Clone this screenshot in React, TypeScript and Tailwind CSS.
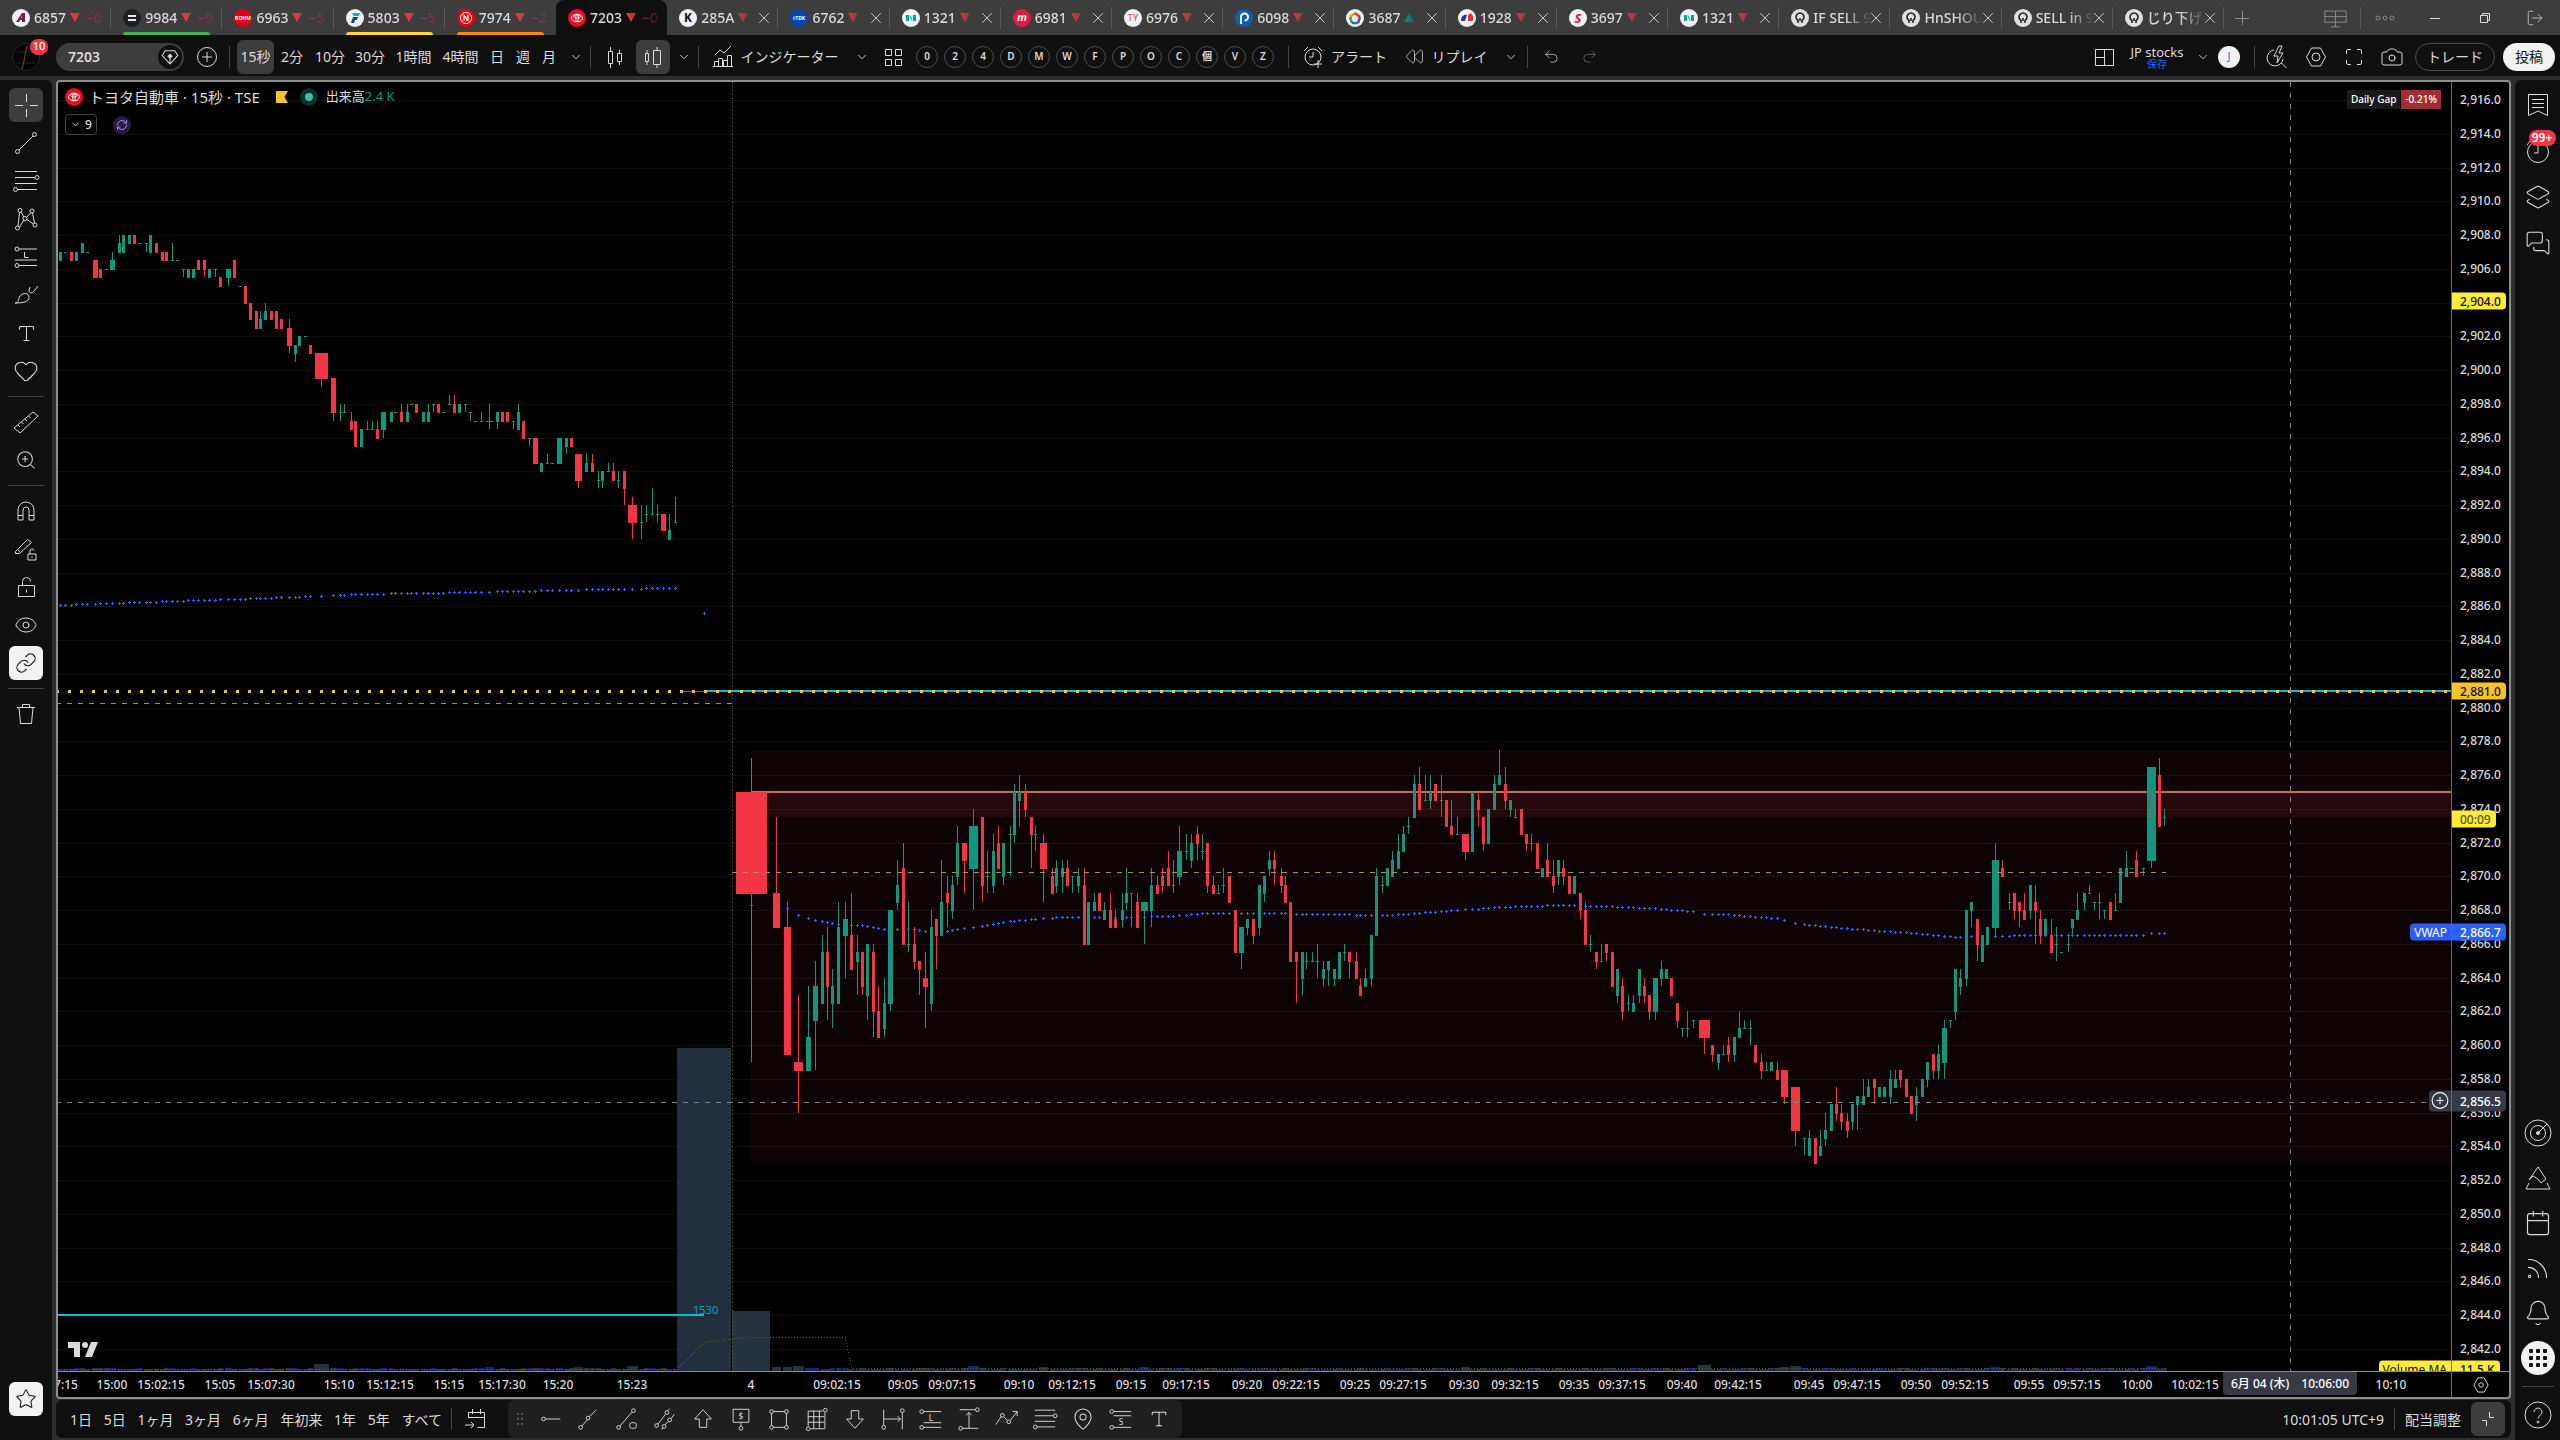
import type { ReactNode } from "react";
import {
  Bell,
  Calendar,
  Camera,
  ChevronDown,
  Eye,
  Heart,
  Layers2,
  Link,
  LockOpen,
  LogOut,
  MapPin,
  MessagesSquare,
  Redo2,
  RefreshCw,
  Rewind,
  Rss,
  Ruler,
  Star,
  Trash2,
  Type,
  Undo2,
  X,
  ZoomIn,
} from "lucide-react";

// plot geometry, shared by the svg and the labels laid over it
const PLOT_W = 2393;
const PLOT_H = 1289;
const TOP_PRICE = 2916;
const TOP_Y = 18;
const PX_PER_YEN = 16.878;

const priceY = (p: number) => TOP_Y + (TOP_PRICE - p) * PX_PER_YEN;
const pctY = (y: number) => `${(y / PLOT_H) * 100}%`;
const pctX = (x: number) => `${(x / PLOT_W) * 100}%`;

// [x, open, close, high, low, width], prices are offsets from 2800
type Bar = [number, number, number, number?, number?, number?];

const prevSession: Bar[] = [
  [2, 106.5, 107], [7, 107, 107], [13, 107, 106.5], [18, 106.5, 107], [24, 107, 107.5], [29, 107, 107],
  [37, 106.5, 105.5, 106.5, 105.5, 5], [42, 106, 105.5], [48, 106, 106], [54, 106, 106.5, 107, 106, 5],
  [61, 107, 107.5, 108], [65, 107, 108], [71, 107.5, 108], [76, 108, 107.5], [81, 107.5, 107.5],
  [88, 107.5, 107.5, 107.5, 107], [92, 107, 108], [98, 107.5, 107], [104, 107, 106.5], [108, 107, 106.5],
  [114, 106.5, 106.5, 107.5], [119, 106.5, 106.5], [125, 106, 106, 106, 105.5], [130, 105.5, 106],
  [135, 105.5, 106], [140, 106.5, 106], [146, 106.5, 106, 106.5, 105.5], [151, 105.5, 106],
  [157, 106, 106, 106, 105.5], [162, 105.5, 105], [170, 105.5, 106, 106, 105, 5], [176, 106.5, 105.5],
  [182, 105, 105], [187, 105, 104], [192, 104, 103], [198, 103.5, 102.5], [202, 102.5, 103, 103.5],
  [207, 103, 103.5, 104], [213, 103.5, 103], [218, 103.5, 102.5], [223, 103, 102.5],
  [231, 102.5, 101.5, 103, 101, 5], [237, 101, 101.5, 101.5, 100.5], [241, 101.5, 102], [247, 102, 102],
  [252, 101.5, 101], [263, 101, 99.5, 101, 99, 13], [275, 99.5, 97.5, 99.5, 97, 5], [282, 97.5, 97.5, 98, 97],
  [286, 97.5, 97.5, 98], [293, 97, 96.5, 97.5], [297, 97, 95.5], [303, 95.5, 96.5], [309, 96.5, 96.5, 97],
  [314, 96.5, 96.5, 97], [319, 96.5, 96, 97], [325, 96.5, 97.5, 97.5, 96, 5], [333, 97, 97.5],
  [337, 97.5, 97.5], [343, 97.5, 97, 98], [349, 97, 97.5, 98], [353, 98, 98], [358, 98, 97.5],
  [365, 97, 97.5], [370, 97, 97.5, 98], [375, 98, 98, 98, 97.5], [380, 98, 97.5], [385, 97.5, 97.5],
  [391, 98, 98, 98.5], [396, 98, 97.5, 98.5], [401, 97.5, 98], [407, 98, 98, 98, 97.5],
  [412, 97.5, 97.5, 97.5, 97], [417, 97, 97], [423, 97, 97, 97.5], [431, 97, 97, 98, 96.5, 7],
  [439, 97, 97.5, 97.5, 96.5], [444, 97.5, 97], [449, 97.5, 97], [455, 97, 97, 97, 96.5],
  [460, 96.5, 97.5, 98], [465, 97, 96], [471, 96, 96, 96, 95.5], [477, 96, 94.5, 96, 94.5, 5],
  [483, 94, 94.5], [489, 94.5, 94.5, 95], [494, 94.5, 94.5], [501, 94.5, 96, 96, 94.5, 5],
  [508, 95.5, 96, 96, 95], [513, 96, 95.5], [520, 95, 93.5, 95, 93, 7], [528, 94, 94.5, 95],
  [534, 94.5, 94, 95], [540, 93.5, 93.5, 94, 93], [544, 93.5, 94, 94, 93], [550, 94, 94, 94.5],
  [555, 94, 93.5, 94.5], [560, 93.5, 93.5, 94, 93], [566, 94, 93, 94, 92], [574, 92, 91, 92.5, 90, 9],
  [583, 91, 91, 92, 90], [588, 91.5, 91.5, 92, 91], [594, 91.5, 91.5, 93], [599, 91.5, 91.5, 92, 91],
  [605, 91.5, 90.5, 91.5, 90.5, 5], [611, 90, 90.5, 91.5], [617, 91, 91, 92.5],
];

const session: Bar[] = [
  [693, 75, 69, 77, 59, 31], [718, 69, 67, 73.5, 67, 7], [729, 67, 59.5, 68.5, 59.5, 7],
  [740, 59, 58.5, 63, 56, 9], [750, 58.5, 60.5, 63.5, 58.5, 5], [757, 61.5, 63.5, 65, 58.5, 5],
  [764, 62.5, 65.5, 66.5], [769, 65.5, 63.5, 67, 61.5], [774, 62.5, 63.5, 64.5, 61], [780, 62.5, 67, 68.5],
  [787, 66.5, 67.5, 68.5, 64, 5], [793, 66.5, 64.5, 69], [799, 65, 65.5, 66.5, 63], [804, 65.5, 63.5, 65.5, 63],
  [809, 63, 66, 66, 61.5], [815, 65.5, 62, 66, 60.5], [820, 62, 60.5, 63.5], [826, 61, 62.5, 64, 60.5],
  [832, 62.5, 68, 68, 62, 5], [839, 68.5, 69.5, 71, 68], [845, 70.5, 66, 72], [850, 66, 66, 68.5, 65.5],
  [856, 66, 65, 67, 64.5], [861, 65, 64.5, 65, 63], [867, 64, 63.5, 65.5, 61, 5], [873, 62.5, 67, 68, 62],
  [878, 67.5, 66.5, 67.5, 64.5], [883, 66.5, 68.5, 71], [889, 69, 68.5, 70, 67], [894, 68, 69.5, 70, 67.5],
  [899, 70, 72, 73, 69.5], [906, 72, 71, 72, 69, 5], [915, 70.5, 73, 74, 68, 9], [924, 73.5, 69.5, 73.5, 68.5],
  [929, 70, 70, 71.5, 69], [935, 69.5, 71.5, 72.5, 69], [940, 72, 70.5, 73], [945, 70, 72, 72, 69.5],
  [952, 72.5, 72.5, 73, 70], [956, 72.5, 75, 75.5, 72], [961, 74.5, 75, 76, 73], [967, 75, 74, 75.5, 73.5],
  [973, 73.5, 72.5, 73.5, 70.5], [977, 72.5, 72.5, 73, 71.5], [985, 72, 70.5, 72.5, 68.5, 7], [994, 70, 69, 70.5],
  [998, 69.5, 70.5, 71, 69], [1004, 70, 70.5, 71, 69], [1009, 70.5, 69.5, 71], [1014, 70, 70, 70, 69],
  [1020, 69.5, 70, 70.5, 69], [1026, 69.5, 66, 70.5], [1030, 66, 68.5], [1036, 68, 68.5, 69], [1041, 69, 68],
  [1046, 67.5, 68, 68.5], [1052, 68, 67, 69], [1057, 67.5, 67, 68], [1064, 67.5, 68, 69, 67],
  [1068, 68.5, 69, 70.5, 68], [1073, 69, 69, 69, 67], [1079, 68.5, 67, 69], [1086, 68, 68.5, 68.5, 66, 7],
  [1093, 68, 69.5, 70.5, 67], [1099, 69.5, 69, 70], [1104, 70, 69.5, 70.5, 69], [1110, 70.5, 69.5, 71.5],
  [1115, 69.5, 69.5, 71, 69], [1121, 70, 71.5, 73, 69.5, 5], [1128, 71.5, 71.5, 72.5, 71],
  [1133, 71, 72, 72.5, 70.5], [1139, 72.5, 72, 73, 71], [1144, 71.5, 71.5, 72.5, 71], [1149, 72, 69.5, 72, 69],
  [1155, 69.5, 69, 70], [1160, 69, 69, 69.5], [1165, 69.5, 69.5, 70.5, 69], [1171, 70, 68.5], [1177, 68, 65.5],
  [1183, 65.5, 67, 67, 64.5, 5], [1189, 67, 67.5, 67.5, 66.5], [1195, 67.5, 66.5, 67.5, 66],
  [1201, 67, 69.5, 69.5, 66.5], [1206, 69, 70, 70, 68.5], [1211, 70.5, 71, 71.5, 70], [1216, 71, 70.5, 71.5, 69.5],
  [1223, 70, 69.5, 70.5, 69], [1227, 69.5, 68.5, 70], [1232, 68.5, 65], [1238, 65.5, 65, 65.5, 62.5],
  [1244, 64, 65.5, 65.5, 63], [1248, 65, 65, 65.5, 64.5], [1254, 65, 65, 65.5], [1259, 65, 65, 66, 64],
  [1265, 64, 64.5, 65, 63.5], [1270, 64.5, 65, 65, 63.5], [1276, 64, 64.5, 64.5, 63.5], [1281, 64, 65.5],
  [1286, 65.5, 65.5, 66, 65], [1291, 65.5, 65, 65.5, 64], [1298, 65, 64, 65.5], [1302, 63.5, 63, 64],
  [1307, 63.5, 64, 64.5], [1313, 64, 66.5, 66.5, 63.5], [1318, 66.5, 70, 70.5], [1324, 69.5, 69.5, 70, 69],
  [1329, 69.5, 70.5], [1334, 70, 71, 71.5], [1340, 70.5, 71.5, 72.5], [1345, 71.5, 72.5, 73],
  [1350, 73, 73, 73.5, 72.5], [1356, 73.5, 75.5, 76], [1361, 75.5, 74, 76.5], [1367, 74.5, 74.5, 76],
  [1372, 74.5, 75, 76, 74], [1377, 75.5, 74.5], [1383, 74.5, 74.5, 76, 73.5], [1388, 74.5, 73],
  [1393, 73, 72.5, 74.5], [1399, 72.5, 72.5, 73.5], [1407, 72.5, 71.5, 72.5, 71, 7], [1414, 71.5, 75],
  [1420, 74.5, 74, 75, 73], [1425, 73.5, 72, 73.5, 71.5], [1430, 72, 74], [1436, 74, 75.5, 76],
  [1441, 75.5, 76, 77.5], [1447, 75.5, 74.5, 76.5, 74], [1452, 74, 74.5, 74.5, 73.5], [1457, 73.5, 73.5, 74],
  [1463, 74, 72.5], [1468, 72.5, 72, 72.5, 71.5], [1473, 72, 72, 72.5, 71.5], [1479, 72, 70.5], [1484, 70, 70.5],
  [1489, 71, 70, 72], [1495, 70, 69.5, 71, 69], [1500, 70, 71, 71, 69.5], [1505, 70.5, 70, 71, 69.5],
  [1511, 70, 69], [1516, 69, 70], [1522, 69, 68, 69, 67.5], [1527, 68, 66, 68.5], [1532, 66, 66, 66.5, 65.5],
  [1538, 65.5, 65, 65.5, 64.5], [1543, 65, 65, 66], [1548, 66, 65.5, 66, 65], [1554, 65.5, 63.5],
  [1559, 63, 64.5, 64.5, 62.5], [1564, 63.5, 62, 64, 61.5], [1570, 62.5, 62.5, 63, 62], [1575, 62, 62.5, 63],
  [1581, 63, 64.5, 64.5, 62.5], [1586, 63.5, 63, 64, 62.5], [1591, 63, 62, 63, 61.5], [1597, 62, 64, 64, 61.5, 5],
  [1603, 64, 64.5, 65, 63.5], [1608, 64, 64.5], [1613, 64, 63], [1619, 62.5, 61.5, 62.5, 61],
  [1624, 61, 61, 61, 60.5], [1629, 61, 61, 62, 60.5], [1635, 61.5, 61.5, 61.5, 61], [1646, 61.5, 60.5, 61.5, 59.5, 11],
  [1654, 60, 59.5, 60, 59], [1660, 59, 59.5, 59.5, 58.5], [1665, 59.5, 59.5, 60], [1670, 60, 59.5, 60.5, 59],
  [1676, 59.5, 60.5, 60.5, 59], [1681, 60.5, 61, 62], [1686, 61, 61, 61.5], [1692, 61, 61, 61.5, 60],
  [1697, 60, 59], [1703, 59, 58.5, 59.5, 58], [1708, 58.5, 58.5, 59], [1713, 58.5, 59], [1719, 58.5, 58, 59],
  [1726, 58.5, 57, 58.5, 56.5, 7], [1737, 57.5, 55, 57.5, 54, 9], [1746, 54.5, 54.5, 54.5, 53.5],
  [1751, 53.5, 54.5, 55], [1757, 54.5, 53], [1762, 53.5, 54, 55], [1767, 54.5, 55, 56, 54], [1773, 55, 56.5],
  [1778, 56.5, 56, 57.5, 55.5], [1783, 56, 55.5, 56.5, 55], [1789, 55.5, 55, 56, 54.5], [1794, 55.5, 56.5, 56.5, 55],
  [1799, 56.5, 57, 57, 55], [1805, 56.5, 57, 58], [1810, 57, 57.5, 58], [1816, 58, 57.5, 58, 56.5],
  [1821, 57, 57.5], [1826, 57, 57.5], [1832, 57, 58, 58.5, 56.5], [1837, 57.5, 58, 58.5],
  [1842, 58.5, 58, 58.5, 57.5], [1848, 58, 57], [1853, 57, 56], [1858, 56.5, 57, 57.5, 55.5], [1864, 57, 58],
  [1869, 58, 59, 59, 57.5], [1875, 59.5, 58.5, 59.5, 58], [1880, 58.5, 59.5, 60, 58], [1886, 59, 61, 61.5, 58, 5],
  [1892, 61.5, 61.5, 61.5, 61], [1897, 62, 64.5, 64.5, 61.5], [1902, 63.5, 64, 64.5, 63], [1908, 64, 68, 68, 63.5],
  [1913, 68, 68.5, 68.5, 67], [1919, 67.5, 66, 67.5, 65], [1924, 65, 66.5], [1929, 66, 67],
  [1937, 67, 71, 72, 66.5, 7], [1944, 70.5, 70, 71], [1951, 68.5, 68.5, 69, 68], [1956, 69, 68, 69, 67.5],
  [1961, 68.5, 68, 68.5, 67], [1966, 68, 67.5, 69], [1972, 68, 69.5, 69.5, 67.5], [1977, 68.5, 68, 69.5, 66],
  [1982, 67.5, 66.5, 68, 66], [1987, 66.5, 67.5], [1993, 66.5, 65.5, 67.5], [1998, 66, 66, 67, 65],
  [2003, 65.5, 65.5], [2010, 66, 66, 66.5, 65.5], [2014, 67, 67.5, 67.5, 66.5], [2019, 67.5, 68, 69],
  [2026, 68.5, 69, 69, 68], [2031, 69, 69, 69.5], [2036, 68.5, 68.5, 68.5, 68], [2041, 68.5, 68.5, 69, 67.5],
  [2046, 68, 68, 68, 67.5], [2052, 68.5, 67.5], [2057, 68, 68, 69], [2062, 68.5, 70.5], [2068, 70, 70.5, 71.5],
  [2073, 70.5, 70.5], [2078, 71, 70, 71.5], [2085, 70.5, 70.5, 70.5, 70], [2093, 71, 76.5, 76.5, 70.5, 9],
  [2101, 76, 73, 77], [2106, 73.5, 73.5, 74, 73],
];

const vwap: [number, number][] = [
  [2, 523], [54, 521], [114, 519], [176, 517], [231, 515], [275, 513], [303, 512], [358, 511], [417, 510],
  [455, 509], [501, 508], [550, 507], [617, 506], [693, 823], [729, 826], [740, 833], [750, 836], [757, 838],
  [780, 842], [804, 843], [826, 847], [856, 847], [867, 849], [889, 849], [906, 846], [935, 842], [961, 838],
  [985, 836], [1004, 835], [1057, 835], [1115, 834], [1149, 831], [1227, 831], [1244, 832], [1286, 832],
  [1300, 833], [1334, 833], [1356, 831], [1399, 828], [1441, 825], [1500, 823], [1548, 824], [1591, 826],
  [1635, 829], [1646, 832], [1665, 832], [1700, 835], [1719, 836], [1737, 841], [1762, 844], [1800, 847],
  [1842, 850], [1880, 853], [1902, 855], [1913, 854], [1998, 853], [2085, 853], [2093, 851], [2106, 851],
];

function vwapAt(x: number) {
  const i = Math.max(1, vwap.findIndex(([vx]) => vx >= x));
  const [x0, y0] = vwap[i - 1];
  const [x1, y1] = vwap[i];
  return Math.round(y0 + ((x - x0) / (x1 - x0)) * (y1 - y0));
}

const timeLabels: [string, number][] = [
  ["14:57:15", -4], ["15:00", 54], ["15:02:15", 103], ["15:05", 162], ["15:07:30", 213], ["15:10", 281],
  ["15:12:15", 332], ["15:15", 391], ["15:17:30", 444], ["15:20", 500], ["15:23", 574], ["4", 693],
  ["09:02:15", 779], ["09:05", 845], ["09:07:15", 894], ["09:10", 961], ["09:12:15", 1014], ["09:15", 1073],
  ["09:17:15", 1128], ["09:20", 1189], ["09:22:15", 1238], ["09:25", 1297], ["09:27:15", 1345],
  ["09:30", 1406], ["09:32:15", 1457], ["09:35", 1516], ["09:37:15", 1564], ["09:40", 1624],
  ["09:42:15", 1680], ["09:45", 1751], ["09:47:15", 1799], ["09:50", 1858], ["09:52:15", 1907],
  ["09:55", 1971], ["09:57:15", 2019], ["10:00", 2079], ["10:02:15", 2137], ["10:10", 2333],
];

function Glyph({ size = 28, children }: { size?: number; children: ReactNode }) {
  return (
    <svg width={size} height={size} viewBox="0 0 28 28" fill="none" stroke="currentColor" className="shrink-0" aria-hidden="true">
      {children}
    </svg>
  );
}

function Dots({ at }: { at: [number, number][] }) {
  return (
    <>
      {at.map(([x, y]) => (
        <circle key={`${x}-${y}`} cx={x} cy={y} r="2" />
      ))}
    </>
  );
}

const glyphText = "fill-current stroke-none font-['Noto_Sans',sans-serif] text-[9px]";

/* ---------- tab strip ---------- */

function Disc({ bg, children }: { bg: string; children?: ReactNode }) {
  return (
    <svg width="18" height="18" viewBox="0 0 18 18" className="shrink-0" aria-hidden="true">
      <circle cx="9" cy="9" r="9" fill={bg} />
      {children}
    </svg>
  );
}

const mark = "font-['Noto_Sans',sans-serif] font-bold";

function ToyotaMark() {
  return (
    <Disc bg="#eb0a1e">
      <g fill="none" stroke="#fff">
        <ellipse cx="9" cy="9" rx="5.5" ry="3.8" />
        <ellipse cx="9" cy="7.4" rx="3.2" ry="1.6" />
        <ellipse cx="9" cy="9" rx="1.4" ry="3.6" />
      </g>
    </Disc>
  );
}

const nikkei = (
  <Disc bg="#f0f3fa">
    <path d="M4 6h3v6H4zM11 6h3v6h-3z" fill="#00a88a" />
    <path d="M8 6.500l2 5" stroke="#00a88a" />
  </Disc>
);

const ideaMark = (
  <Disc bg="#e0e0e0">
    <path d="M7 14v-2.500a4 4 0 1 1 4 0V14" fill="none" stroke="#222" strokeWidth="1.6" />
    <path d="M9 9v3" stroke="#222" strokeWidth="1.6" />
  </Disc>
);

type Tab = { name: string; logo: ReactNode; change?: string; up?: boolean; line?: string; closable?: boolean; active?: boolean };

const tabs: Tab[] = [
  { name: "6857", change: "−0", logo: <Disc bg="#f0f3fa"><path d="M4 13l6-9h3v9h-3v-2H8l-1 2zM9 9h1V7z" fill="#8a1450" fillRule="evenodd" /></Disc> },
  { name: "9984", change: "−9", line: "bg-[#4caf50]", logo: <Disc bg="#1c2126"><path d="M5 7h8M5 11h8" stroke="#e8e8e8" strokeWidth="2" /></Disc> },
  { name: "6963", change: "−5", logo: <Disc bg="#e00012"><text x="9" y="11" textAnchor="middle" fill="#fff" fontSize="5" className={mark}>ROHM</text></Disc> },
  { name: "5803", change: "−5", line: "bg-[#fdd835]", logo: <Disc bg="#f0f3fa"><path d="M6 4h8l-1 3H8z" fill="#1ba1e2" /><path d="M5 14l2-6h5l-1 3H9l-1 3z" fill="#123f9c" /></Disc> },
  { name: "7974", change: "−2", line: "bg-[#fb8c00]", logo: <Disc bg="#e60012"><circle cx="9" cy="9" r="5.5" fill="none" stroke="#fff" /><text x="9" y="12" textAnchor="middle" fill="#fff" fontSize="8" className={mark}>N</text></Disc> },
  { name: "7203", change: "−0", active: true, logo: <ToyotaMark /> },
  { name: "285A", closable: true, logo: <Disc bg="#f0f3fa"><text x="9" y="13" textAnchor="middle" fill="#111" fontSize="12" className={mark}>K</text></Disc> },
  { name: "6762", closable: true, logo: <Disc bg="#0046ad"><text x="9" y="11" textAnchor="middle" fill="#fff" fontSize="5" className={mark}>◊TDK</text></Disc> },
  { name: "1321", closable: true, logo: nikkei },
  { name: "6981", closable: true, logo: <Disc bg="#e4174a"><text x="9" y="12" textAnchor="middle" fill="#fff" fontSize="11" fontStyle="italic" className={mark}>m</text></Disc> },
  { name: "6976", closable: true, logo: <Disc bg="#f0f3fa"><text x="9" y="12" textAnchor="middle" fill="#e05555" fontSize="9" className="font-['Noto_Sans',sans-serif]">TY</text></Disc> },
  { name: "6098", closable: true, logo: <Disc bg="#0f5fae"><path d="M6 15V8a3.500 3.500 0 1 1 3.500 3.500" fill="none" stroke="#fff" strokeWidth="2" /></Disc> },
  { name: "3687", closable: true, up: true, logo: <Disc bg="#f0f3fa"><g strokeWidth="2.5"><path d="M9 4L4 8" stroke="#f5a000" /><path d="M9 4l5 4" stroke="#e33333" /><path d="M4 8l2 6" stroke="#2ba84a" /><path d="M14 8l-2 6" stroke="#7a3fa0" /><path d="M6 14h6" stroke="#1878c8" /></g></Disc> },
  { name: "1928", closable: true, logo: <Disc bg="#f0f3fa"><path d="M3 12c0-5 3-7 6-6l-2 6z" fill="#23408f" /><path d="M10 12V6l3-2 2 3v5z" fill="#e33333" /></Disc> },
  { name: "3697", closable: true, logo: <Disc bg="#f0f3fa"><text x="9" y="14" textAnchor="middle" fill="#e0103a" fontSize="13" fontStyle="italic" className={mark}>S</text></Disc> },
  { name: "1321", closable: true, logo: nikkei },
  { name: "IF SELL 9", closable: true, logo: ideaMark },
  { name: "HnSHOULDER", closable: true, logo: ideaMark },
  { name: "SELL in 9", closable: true, logo: ideaMark },
  { name: "じり下げか", closable: true, logo: ideaMark },
];

function WindowButton({ label, children }: { label: string; children: ReactNode }) {
  return (
    <button aria-label={label} className="flex h-[35px] w-[50px] items-center justify-center">
      {children}
    </button>
  );
}

function TabStrip() {
  return (
    <div className="flex h-[35px] bg-[#3d3d3d] text-[14px] font-medium text-[#dbdbdb]">
      <div role="tablist" className="flex min-w-0 flex-1">
        {tabs.map((tab, i) => (
          <button
            key={i}
            role="tab"
            aria-selected={!!tab.active}
            className={`relative flex min-w-0 flex-1 items-center gap-1 pl-3 ${tab.active ? "rounded-t-lg bg-[#0f0f0f]" : ""}`}
          >
            {tab.logo}
            <span
              className={`flex h-5 items-center gap-1 overflow-hidden whitespace-nowrap leading-5 ${
                tab.closable
                  ? "w-[58px] [mask-image:linear-gradient(90deg,#000_55%,transparent)]"
                  : "w-[70px] [mask-image:linear-gradient(90deg,#000_50%,transparent_110%)]"
              }`}
            >
              {tab.name}
              {/^\d/.test(tab.name) && (
                <svg width="10" height="9" viewBox="0 0 10 9" className="shrink-0" aria-hidden="true">
                  {tab.up ? <path d="M5 0l5 9H0z" fill="#089981" /> : <path d="M0 0h10L5 9z" fill="#f23645" />}
                </svg>
              )}
              {tab.change && <span className="ml-0.5 text-[#f23645]">{tab.change}</span>}
            </span>
            {tab.closable && <X size={18} strokeWidth={1.3} className="absolute right-[5px] top-[9px] text-[#c8c8c8]" />}
            {tab.line && <span className={`absolute bottom-0 left-3 right-3 h-[3px] rounded-t-sm ${tab.line}`} />}
            {!tab.active && i !== 4 && <span className="absolute right-0 top-[7px] h-[22px] w-px bg-[#5a5a5a]" />}
          </button>
        ))}
      </div>
      <div className="flex w-[336px] shrink-0 items-center justify-between pl-1 text-[#dbdbdb]">
        <button aria-label="新規タブ" className="text-[#8c8c8c]"><Glyph><path d="M7 14.500h14M14.500 7v14" /></Glyph></button>
        <div className="flex items-center">
          <WindowButton label="ウィンドウ配置">
            <Glyph size={26}><path d="M3 6.500h23v12H3zM14.500 6.500v17M10 23.500h9M3 12.500h23" stroke="#8c8c8c" /></Glyph>
          </WindowButton>
          <span className="-mr-px h-[22px] w-px bg-[#5a5a5a]" />
          <WindowButton label="メニュー">
            <Glyph><g stroke="#8c8c8c"><circle cx="7" cy="14" r="2" /><circle cx="14" cy="14" r="2" /><circle cx="21" cy="14" r="2" /></g></Glyph>
          </WindowButton>
          <WindowButton label="最小化"><Glyph><path d="M9 14.500h10" /></Glyph></WindowButton>
          <WindowButton label="元のサイズに戻す"><Glyph><path d="M9.500 11.500h7v7h-7zM11.500 11.500v-2h7v7h-2" /></Glyph></WindowButton>
          <WindowButton label="終了"><LogOut size={18} strokeWidth={1} /></WindowButton>
        </div>
      </div>
    </div>
  );
}

/* ---------- top toolbar ---------- */

const Sep = () => <span className="h-[22px] w-px shrink-0 bg-[#434343]" />;

const Chevron = () => <ChevronDown size={14} strokeWidth={1.5} />;

function Cell({ width, label, children, active }: { width: string; label?: string; children: ReactNode; active?: boolean }) {
  return (
    <button
      aria-label={label}
      className={`flex h-[34px] shrink-0 items-center justify-center rounded-md whitespace-nowrap ${width} ${active ? "bg-[#3d3d3d]" : ""}`}
    >
      {children}
    </button>
  );
}

const intervals = [
  ["2分", "w-[36px]"],
  ["10分", "w-[40px]"],
  ["30分", "w-[40px]"],
  ["1時間", "w-[47px]"],
  ["4時間", "w-[47px]"],
  ["日", "w-[26px]"],
  ["週", "w-[26px]"],
  ["月", "w-[26px]"],
];

function TopBar() {
  return (
    <div className="flex h-[41px] items-center bg-[#0f0f0f] pt-0.5 text-[14px] text-[#dbdbdb]">
      <div className="relative ml-3 h-7 w-7 shrink-0 rounded-full bg-black">
        <svg viewBox="0 0 28 28" className="h-7 w-7" aria-hidden="true">
          <circle cx="14" cy="14" r="13.5" fill="#050507" stroke="#2a2a2a" />
          <path d="M5 20h18M5 9h18" stroke="#1d2233" />
          <path d="M10 26l2-8 1-6 2-9" fill="none" stroke="#8a4314" />
        </svg>
        <span className="absolute -top-1 left-[18px] flex h-4 w-[18px] items-center justify-center rounded-full bg-[#f23645] text-[11px] font-medium text-white">
          10
        </span>
      </div>
      <label className="ml-4 flex h-7 w-32 shrink-0 items-center rounded-full bg-[#3d3d3d] pl-3 pr-0.5">
        <input aria-label="シンボル検索" defaultValue="7203" className="w-0 flex-1 bg-transparent text-[14px] font-semibold outline-none" />
        <span className="flex h-6 w-6 items-center justify-center rounded-full bg-[#0f0f0f]">
          <Glyph size={22}>
            <path d="M8 6h12l4 6-10 11L4 12zM14 15v7" strokeWidth="1.3" />
            <path d="M14 10l3 3-3 3-3-3z" fill="currentColor" />
          </Glyph>
        </span>
      </label>
      <Cell width="w-[45px]" label="追加"><Glyph><circle cx="14" cy="14" r="9.5" /><path d="M9 14h10M14 9v10" /></Glyph></Cell>
      <Sep />
      <span className="w-[7px]" />
      <Cell width="w-[37px]" active>15秒</Cell>
      {intervals.map(([name, width]) => (
        <Cell key={name} width={width}>{name}</Cell>
      ))}
      <Cell width="w-[28px]" label="時間足"><Chevron /></Cell>
      <Sep />
      <Cell width="w-[45px]" label="ローソク足"><Glyph><path d="M8.500 8.500h4v12h-4zM10.500 4v4M10.500 21v4M17.500 10.500h4v8h-4zM19.500 7v3M19.500 19v3" /></Glyph></Cell>
      <Cell width="w-[34px]" label="出来高ローソク足" active><Glyph><path d="M6.500 10.500h3v8h-3zM8 7v3M8 19v3M14.500 7.500h7v14h-7zM18 4v3M18 22v3" /></Glyph></Cell>
      <Cell width="w-[28px]" label="チャート形式"><Chevron /></Cell>
      <Sep />
      <Cell width="w-[149px]">
        <Glyph><path d="M5.500 23.500v-5h4v5M9.500 23.500v-8h4v8M14.500 23.500v-6h4v6M18.500 23.500v-11h4v11M4 23.500h20M6 12l5-5 4 3 7-7" /></Glyph>
        <span className="ml-1">インジケーター</span>
      </Cell>
      <Cell width="w-[28px]" label="お気に入り"><Chevron /></Cell>
      <Cell width="w-[34px]" label="テンプレート"><Glyph><path d="M6.500 6.500h6v6h-6zM16.500 6.500h6v6h-6zM6.500 16.500h6v6h-6zM16.500 16.500h6v6h-6z" /></Glyph></Cell>
      <div className="ml-1.5 flex gap-1.5">
        {"024DMWFPOC個VZ".split("").map((c) => (
          <button key={c} className="flex h-[22px] w-[22px] items-center justify-center rounded-full border border-[#4a4a4a] text-[10px] font-semibold">
            {c}
          </button>
        ))}
      </div>
      <span className="w-3.5" />
      <Sep />
      <Cell width="w-[108px]">
        <Glyph><circle cx="14" cy="14" r="8" /><path d="M14 9v5h-4M5 8l4-4M19 4l4 4M19 17v8M15 21h8" /></Glyph>
        <span className="ml-1">アラート</span>
      </Cell>
      <Cell width="w-[98px]">
        <Rewind size={19} strokeWidth={1} />
        <span className="ml-2">リプレイ</span>
      </Cell>
      <Cell width="w-[32px]" label="リプレイ設定"><Chevron /></Cell>
      <Sep />
      <Cell width="w-[46px]" label="元に戻す"><Undo2 size={17} strokeWidth={1} /></Cell>
      <Cell width="w-[30px]" label="やり直す"><Redo2 size={17} strokeWidth={1} className="text-[#7a7a7a]" /></Cell>
      <div className="ml-auto flex items-center pr-[5px]">
        <Cell width="w-[36px]" label="レイアウト"><Glyph><path d="M5.500 6.500h18v16h-18zM14.500 6.500v16M5.500 14.500h9" /></Glyph></Cell>
        <button className="flex w-[70px] flex-col items-center leading-none">
          <span className="text-[13px] leading-[14px]">JP stocks</span>
          <span className="text-[10px] leading-[10px] text-[#2962ff]">保存</span>
        </button>
        <Cell width="w-[22px]" label="レイアウト一覧"><Chevron /></Cell>
        <span className="mr-3.5 ml-1 flex h-[22px] w-[22px] items-center justify-center rounded-full bg-[#f2f2f2] text-[11px] text-[#2979c9]">J</span>
        <Sep />
        <Cell width="w-[42px]" label="クイック検索"><Glyph><path d="M12 7a8 8 0 1 0 9 9M19.500 20l5 5M17 3l-5 10h4l-1 7 6-10h-4l3-7z" /></Glyph></Cell>
        <Cell width="w-[38px]" label="設定"><Glyph><path d="M9.500 5h9l5 9-5 9h-9l-5-9z" /><circle cx="14" cy="14" r="4" /></Glyph></Cell>
        <Cell width="w-[38px]" label="全画面"><Glyph><path d="M6.500 11V8q0-1.500 1.500-1.500h3M17 6.500h3q1.500 0 1.500 1.500v3M21.500 17v3q0 1.500-1.500 1.500h-3M11 21.500H8Q6.500 21.500 6.500 20v-3" /></Glyph></Cell>
        <Cell width="w-[38px]" label="スナップショット"><Camera size={24} strokeWidth={1} /></Cell>
        <button className="ml-1 h-7 w-20 rounded-full border border-[#4a4a4a]">トレード</button>
        <button className="ml-2 h-7 w-[52px] rounded-full bg-[#f2f2f2] text-[#0f0f0f]">投稿</button>
      </div>
    </div>
  );
}

/* ---------- side bars ---------- */

const drawTools: (ReactNode | null)[] = [
  <Glyph><path d="M3 14.500h8M18 14.500h8M14.500 3v8M14.500 18v8" /></Glyph>,
  <Glyph><Dots at={[[5.5, 22.5], [22.5, 5.5]]} /><path d="M7 21L21 7" /></Glyph>,
  <Glyph><path d="M3 4.500h22M3 10.500h20M3 16.500h22M5 22.500h20" /><Dots at={[[25, 10.5], [3.5, 22.5]]} /></Glyph>,
  <Glyph><Dots at={[[5.5, 23], [8, 5.5], [13, 13.5], [20, 6], [23, 20]]} /><path d="M6 21L7.500 7.500M9 7l3 5M15 12l4-4.500M20.500 8l2 10M7.500 22l4.500-7M15 14.500l6.500 4.500" /></Glyph>,
  <Glyph><path d="M7 6h18M3 17h22M7 22.500h18M12.500 9v5.500h4" /><Dots at={[[5, 6], [5, 22.5]]} /></Glyph>,
  <Glyph><path d="M3 22c4 0 3-4 5-7 3-4 9-3 9 1 0 5-6 6-14 6zM17 9c0 3 3 4 5 1l4-5M17 9l1-3" /></Glyph>,
  <Type size={21} strokeWidth={1.2} />,
  <Heart size={26} strokeWidth={1} />,
  null,
  <Glyph><path d="M2 20L21 4l5 4L8 25zM6 17l2 2M9.500 14l2 2M13 11l2 2M16.500 8l2 2" /></Glyph>,
  <ZoomIn size={22} strokeWidth={1.1} />,
  null,
  <Glyph><path d="M6 23V13a8 8 0 0 1 16 0v10h-5V13a3 3 0 0 0-6 0v10zM6 18.500h5M17 18.500h5" /></Glyph>,
  <Glyph><path d="M3.500 16.500l12-12 4 3-12 11h-4zM5 14l4 4M16 19h8v6h-8zM18 19v-3q0-2 2-2t2 1.500M20 21.500v1.500" /></Glyph>,
  <Glyph><path d="M6.500 12.500h16v11h-16zM10.500 12.500v-4a4 4 0 0 1 8 0M14.500 16.500v3" /></Glyph>,
  <Eye size={24} strokeWidth={1} />,
  <Link size={22} strokeWidth={1.2} />,
  null,
  <Glyph><path d="M5 7.500h18M10.500 7V4.500h7V7M7 7.500l1.500 16h11L21 7.500" /></Glyph>,
];

function DrawBar() {
  return (
    <div className="flex w-[52px] shrink-0 flex-col items-center gap-1 rounded-tr-md bg-[#0f0f0f] pb-6 pt-2 text-[#dbdbdb]">
      {drawTools.map((icon, i) =>
        icon ? (
          <button
            key={i}
            aria-label={`描画ツール ${i + 1}`}
            className={`flex h-[34px] w-[34px] items-center justify-center rounded-md ${i === 0 ? "bg-[#3d3d3d]" : ""} ${i === 16 ? "bg-[#f2f2f2] text-[#0f0f0f]" : ""}`}
          >
            {icon}
          </button>
        ) : (
          <span key={i} className="my-1 h-px w-9 bg-[#434343]" />
        ),
      )}
      <button aria-label="お気に入りツール" className="mt-auto flex h-[34px] w-[34px] items-center justify-center rounded-md bg-[#f2f2f2] text-[#0f0f0f]">
        <Star size={22} strokeWidth={1.1} />
      </button>
    </div>
  );
}

function SideButton({ label, children }: { label: string; children: ReactNode }) {
  return (
    <button aria-label={label} className="relative flex h-[34px] w-[34px] items-center justify-center">
      {children}
    </button>
  );
}

function WidgetBar() {
  return (
    <div className="flex w-[45px] shrink-0 flex-col items-center gap-3 rounded-tl-md bg-[#0f0f0f] pb-2 pt-2 text-[#dbdbdb]">
      <SideButton label="ウォッチリスト"><Glyph><path d="M4.500 3.500h19v21L14 20l-9.500 4.500zM8 8.500h12M8 12.500h12M8 16.500h12" /></Glyph></SideButton>
      <SideButton label="アラート">
        <Glyph><circle cx="14" cy="15" r="10.5" /><path d="M14 9v7h-4M3 8l4-5M21 3l4 5" /></Glyph>
        <span className="absolute -right-px -top-1 flex h-4 w-[27px] items-center justify-center rounded-full bg-[#f23645] text-[12px] font-semibold text-white">99+</span>
      </SideButton>
      <SideButton label="オブジェクトツリー"><Layers2 size={26} strokeWidth={1} /></SideButton>
      <SideButton label="チャット"><MessagesSquare size={26} strokeWidth={1} /></SideButton>
      <div className="mt-auto flex flex-col items-center gap-[11px]">
        <SideButton label="スクリーナー"><Glyph><circle cx="14" cy="14" r="13" /><circle cx="14" cy="14" r="7.5" /><circle cx="14" cy="14" r="1.5" fill="currentColor" /><path d="M14 14l9-9" /></Glyph></SideButton>
        <SideButton label="パイン"><Glyph><path d="M14 3L5 16l4-4 5 3 3 4 5-4zM5 19l-3 6h24l-3-6" /></Glyph></SideButton>
        <SideButton label="カレンダー"><Calendar size={28} strokeWidth={1} /></SideButton>
        <SideButton label="ニュース"><Rss size={27} strokeWidth={1} /></SideButton>
        <SideButton label="通知"><Bell size={28} strokeWidth={1} /></SideButton>
        <SideButton label="アプリ">
          <svg width="34" height="34" viewBox="0 0 34 34" aria-hidden="true">
            <circle cx="17" cy="17" r="17" fill="#f2f2f2" />
            {[8, 15, 22].map((y) => [8, 15, 22].map((x) => <rect key={`${x}-${y}`} x={x} y={y} width="4" height="4" rx="1" fill="#0f0f0f" />))}
          </svg>
        </SideButton>
        <span className="h-px w-8 bg-[#434343]" />
        <SideButton label="ヘルプ"><Glyph><circle cx="14" cy="14" r="13" /><path d="M10 11a4 4 0 1 1 6 3.500q-2 1-2 3" /><circle cx="14" cy="21" r="1" /></Glyph></SideButton>
      </div>
    </div>
  );
}

/* ---------- chart ---------- */

function Candles({ bars }: { bars: Bar[] }) {
  return (
    <>
      {bars.map(([x, o, c, h = Math.max(o, c), l = Math.min(o, c), w = 3]) => {
        const top = Math.round(priceY(2800 + Math.max(o, c)));
        const bottom = Math.round(priceY(2800 + Math.min(o, c))) + 1;
        const high = Math.round(priceY(2800 + h));
        const low = Math.round(priceY(2800 + l));
        return (
          <g key={x} fill={c < o ? "#f23645" : "#089981"}>
            <rect x={x} y={high} width="1" height={Math.max(1, low - high)} />
            <rect x={x - (w - 1) / 2} y={top} width={w} height={bottom - top} />
          </g>
        );
      })}
    </>
  );
}

function Volume({ bars }: { bars: Bar[] }) {
  return (
    <>
      {bars.map(([x, o, c, , , w = 3]) => {
        const h = w > 13 ? 60 : w > 3 ? Math.ceil(w * 0.4) + 1 : 2 + (x % 3 === 0 ? 1 : 0);
        const width = w > 13 ? 38 : w + 2;
        return (
          <rect key={x} x={Math.round(x - width / 2)} y={PLOT_H - h} width={width} height={h} fill={c < o || w > 13 || x % 4 === 0 ? "#26323e" : "#12266b"} />
        );
      })}
    </>
  );
}

const gridPrices = Array.from({ length: 38 }, (_, i) => TOP_PRICE - i * 2);

function Plot() {
  const all = [...prevSession, ...session];
  return (
    <svg viewBox={`0 0 ${PLOT_W} ${PLOT_H}`} preserveAspectRatio="none" shapeRendering="crispEdges" className="absolute inset-0 h-full w-full" role="img" aria-label="トヨタ自動車 15秒足チャート">
      {gridPrices.map((p) => (
        <rect key={p} x="0" y={Math.round(priceY(p))} width={PLOT_W} height="1" fill="#101010" />
      ))}
      <rect x="619" y="966" width="54" height="323" fill="#242f3d" />
      <Volume bars={all} />
      <path d="M0 1287.500H619L646 1260.500L688 1255.500H787L794 1286.500H2108" fill="none" stroke="#5c5a1e" strokeDasharray="1 2" />
      <path d="M674.500 0V1289" stroke="#6b6a2c" strokeDasharray="1 3" />
      {[...all.map(([x]) => [x, vwapAt(x)]), [646, 531]].map(([x, y]) => (
        <path key={x} d={`M${x - 1} ${y}h3v1h-3zM${x} ${y - 1}h1v3h-1z`} fill="#2962ff" />
      ))}
      <rect x="0" y="1232" width="646" height="2" fill="#00bcd4" />
      <rect x="693" y="709" width="1700" height="2" fill="#c17a35" />
      <Candles bars={all} />
      <rect x="693" y="668" width="1700" height="413" fill="#f23645" fillOpacity=".055" />
      <rect x="693" y="711" width="1700" height="24" fill="#f23645" fillOpacity=".1" />
      <rect x="624" y="609" width="25" height="1" fill="#089981" />
      <rect x="648" y="608" width="1745" height="2" fill="#00bcd4" />
      <path d="M0 609.500H2393" stroke="#fbc02d" strokeWidth="3" strokeDasharray="3 9" strokeDashoffset="2" />
      <path d="M0 621.500H674" stroke="#a8953c" strokeDasharray="5 6" strokeDashoffset="2" />
      <path d="M674 790.500H2108" stroke="#a8953c" strokeDasharray="5 6" />
      <path d="M0 1020.500H2372" stroke="#758696" strokeDasharray="5 6" strokeDashoffset="2" />
      <path d="M2232.500 0V1289" stroke="#758696" strokeDasharray="5 6" />
    </svg>
  );
}

function PriceTag({ price, className, children }: { price: number; className: string; children: ReactNode }) {
  return (
    <span className={`absolute left-0 -translate-y-1/2 whitespace-nowrap pl-2 pr-[5px] ${className}`} style={{ top: pctY(priceY(price)) }}>
      {children}
    </span>
  );
}

function PriceAxis() {
  return (
    <div className="relative w-[58px] shrink-0 overflow-hidden border-l border-[#6a6a6a] text-[12px] font-medium leading-[17px] text-[#dbdbdb]">
      {gridPrices.map((p) => (
        <span key={p} className="absolute left-2 -translate-y-1/2" style={{ top: pctY(priceY(p) - 1) }}>
          {`${p.toLocaleString("en-US")}.0`}
        </span>
      ))}
      <PriceTag price={2904.1} className="rounded-r-sm bg-[#ffeb3b] text-[#0f0f0f]">2,904.0</PriceTag>
      <PriceTag price={2881} className="rounded-r-sm bg-[#fbc02d] text-[#0f0f0f]">2,881.0</PriceTag>
      <PriceTag price={2873.4} className="rounded-r-sm bg-[#ffeb3b] text-[#5e5600]">00:09</PriceTag>
      <PriceTag price={2866.7} className="rounded-r-sm bg-[#2962ff] text-white">2,866.7</PriceTag>
      <PriceTag price={2856.7} className="rounded-r-sm bg-[#363a45] py-0.5 text-white">2,856.5</PriceTag>
      <PriceTag price={2840.8} className="rounded-tr-sm bg-[#ffeb3b] text-[#0f0f0f]">11.5 K</PriceTag>
    </div>
  );
}

function Legend() {
  return (
    <div className="relative flex flex-col items-start gap-1.5 pl-[7px] pt-1 text-[#dbdbdb]">
      <div className="flex h-[22px] items-center">
        <ToyotaMark />
        <span className="ml-1.5 whitespace-nowrap text-[15px]">トヨタ自動車 · 15秒 · TSE</span>
        <svg width="12" height="12" viewBox="0 0 12 12" className="ml-4" aria-hidden="true"><path d="M0 0h12L8.500 6l3.500 6H0z" fill="#fbc02d" /></svg>
        <span className="ml-3 flex h-[18px] w-[18px] items-center justify-center rounded-full bg-[#0a2e29]">
          <span className="h-2 w-2 rounded-full bg-[#42bda8]" />
        </span>
        <span className="ml-2 text-[13px]">出来高</span>
        <span className="text-[13px] text-[#089981]">2.4 K</span>
      </div>
      <div className="flex items-center gap-4">
        <button className="flex h-[21px] w-8 items-center justify-center gap-1 rounded-sm border border-[#434343] text-[12px] font-medium">
          <ChevronDown size={11} strokeWidth={2} />9
        </button>
        <span className="flex h-[18px] w-[18px] items-center justify-center rounded-full bg-[#291c42] text-[#a98af5]">
          <RefreshCw size={12} strokeWidth={2} />
        </span>
      </div>
    </div>
  );
}

function Chart() {
  return (
    <div className="flex min-h-0 flex-1 flex-col overflow-hidden rounded border-2 border-[#8c8c8c] bg-black">
      <div className="flex min-h-0 flex-1">
        <div className="relative min-w-0 flex-1 overflow-hidden">
          <Plot />
          <Legend />
          <div className="absolute right-2.5 top-2 flex gap-px text-[10px] font-medium leading-[19px] text-white">
            <span className="bg-[#18191c] px-1">Daily Gap</span>
            <span className="bg-[#9c2f31] px-1">-0.21%</span>
          </div>
          <span className="absolute text-[11px] leading-3 text-[#00a5ba]" style={{ left: pctX(635), top: pctY(1222) }}>1530</span>
          <span className="absolute right-0 -translate-y-1/2 rounded-l-sm bg-[#2f5cf0] px-1 text-[12px] leading-[17px] text-white" style={{ top: pctY(priceY(2866.7)) }}>VWAP</span>
          <span className="absolute right-0 flex h-[21px] w-[22px] -translate-y-1/2 items-center justify-center rounded-l-sm bg-[#363a45] text-white" style={{ top: pctY(priceY(2856.7)) }}>
            <Glyph size={20}><circle cx="14" cy="14" r="11" strokeWidth="1.5" /><path d="M9 14h10M14 9v10" strokeWidth="1.5" /></Glyph>
          </span>
          <span className="absolute right-0 -translate-y-1/2 whitespace-nowrap rounded-tl-sm bg-[#ffeb3b] px-1 text-[12px] leading-[17px] text-[#0f0f0f]" style={{ top: pctY(priceY(2840.8)) }}>Volume MA</span>
          <svg width="34" height="20" viewBox="0 0 34 20" className="absolute bottom-[11px] left-2" aria-label="TradingView">
            <g fill="#dbdbdb" stroke="#000" strokeWidth="1" paintOrder="stroke">
              <path d="M2 2h12v15H8V8H2z" />
              <circle cx="19" cy="5" r="3" />
              <path d="M25 2h7l-6 15h-7z" />
            </g>
          </svg>
        </div>
        <PriceAxis />
      </div>
      <div className="flex h-[26px] shrink-0 border-t border-[#8c8c8c] text-[12px] font-medium text-[#dbdbdb]">
        <div className="relative min-w-0 flex-1 overflow-hidden">
          {timeLabels.map(([label, x]) => (
            <span key={label} className="absolute top-1 -translate-x-1/2 leading-[17px]" style={{ left: pctX(x) }}>
              {label}
            </span>
          ))}
          <span className="absolute top-0 flex h-[23px] w-[134px] -translate-x-1/2 items-center justify-center gap-3 rounded-b-sm bg-[#363a45] text-white" style={{ left: pctX(2232) }}>
            <span>6月 04 (木)</span>
            <span>10:06:00</span>
          </span>
        </div>
        <button aria-label="スケール設定" className="flex w-[58px] items-center justify-center border-l border-[#6a6a6a]">
          <Glyph size={18}><path d="M9 3h10l6 11-6 11H9L3 14z" strokeWidth="1.5" /><circle cx="14" cy="14" r="3.5" strokeWidth="1.5" /></Glyph>
        </button>
      </div>
    </div>
  );
}

/* ---------- bottom bar ---------- */

const ranges = ["1日", "5日", "1ヶ月", "3ヶ月", "6ヶ月", "年初来", "1年", "5年", "すべて"];

const favTools: [string, ReactNode][] = [
  ["水平線", <><Dots at={[[6, 14]]} /><path d="M8 14h16" /></>],
  ["トレンドライン", <><Dots at={[[5, 23], [13, 13]]} /><path d="M6.500 21.500L12 15M14.500 11.500L22 4" /></>],
  ["レイ", <><Dots at={[[5, 23], [21, 5]]} /><path d="M6.500 21.500L19.500 6.500" /><rect x="17" y="18" width="7" height="6" rx="2" /></>],
  ["平行チャネル", <><Dots at={[[5, 21], [16, 7], [13, 22], [19, 15]]} /><path d="M6.500 19.500L14.500 9M17 5l2-2M14 20l4-3.500M20.500 13.500L24 9M12 23.500l-2 2" /></>],
  ["上矢印", <path d="M14 4l9 10h-5v9h-8v-9H5z" />],
  ["プライスノート", <><path d="M5.500 3.500h17v14h-17zM14 17.500V22" /><Dots at={[[14, 24]]} /><text x="14" y="14" textAnchor="middle" className={glyphText}>$</text></>],
  ["四角形", <><path d="M6 8v13M22 8v13M8 6h12M8 23h12" /><Dots at={[[6, 6], [22, 6], [6, 23], [22, 23]]} /></>],
  ["グリッド", <><path d="M4.500 5.500h16M22.500 7v17M7 24.500h15.500M4.500 5.500V22M10.500 5v19M16.500 5v19M4 11.500h18M4 17.500h18" /><Dots at={[[23, 4.5], [4.5, 24.5]]} /></>],
  ["下矢印", <path d="M14 24L5 14h5V5h8v9h5z" />],
  ["日付範囲", <><path d="M4 4v17M24 7v18M4 14h18M19 11l3 3-3 3" /><Dots at={[[4, 23], [24, 5]]} /></>],
  ["ロング", <><path d="M6 6h19M6 18h19M6 23h19" /><Dots at={[[4, 6], [4, 23]]} /><text x="14" y="16" textAnchor="middle" className={glyphText}>L</text></>],
  ["価格範囲", <><path d="M4 4h17M7 24h17M14 24V7M11 10l3-3 3 3" /><Dots at={[[23, 4], [5, 24]]} /></>],
  ["パス", <><path d="M2 20l6-9M11 12l4 4M18 15l7-9M20 6h5v5" /><Dots at={[[9, 10], [16, 17]]} /></>],
  ["フィボナッチ", <><path d="M3 4.500h22M3 10.500h20M3 16.500h22M5 22.500h20" /><Dots at={[[25, 10.5], [3.5, 22.5]]} /></>],
  ["ピン", <MapPin x="1" y="1" size={26} strokeWidth={1} />],
  ["ショート", <><path d="M6 6h19M6 10.500h19M6 23h19" /><Dots at={[[4, 6], [4, 23]]} /><text x="14" y="20" textAnchor="middle" className={glyphText}>S</text></>],
  ["テキスト", <Type x="3" y="3" size={22} strokeWidth={1.2} />],
];

function BottomBar() {
  return (
    <div className="mt-px flex h-[38px] shrink-0 items-center rounded-md bg-[#0f0f0f] pr-1.5 text-[14px] text-[#dbdbdb]">
      <div className="ml-3.5 flex w-[372px] justify-between whitespace-nowrap">
        {ranges.map((r) => (
          <button key={r}>{r}</button>
        ))}
      </div>
      <span className="w-[9px]" />
      <Sep />
      <Cell width="w-[48px]" label="日付へ移動"><Glyph><path d="M6.500 13V7.500h16v15h-7M6 12.500h17M10.500 4v5M18.500 4v5M3 20h9M9 17l3 3-3 3" /></Glyph></Cell>
      <div className="ml-2 flex h-[38px] items-center rounded-md bg-[#1f1f1f] pr-1">
        <svg width="24" height="20" viewBox="0 0 24 20" fill="#555" aria-hidden="true">
          {[4, 9, 14].map((y) => [9, 13].map((x) => <rect key={`${x}-${y}`} x={x} y={y} width="2" height="2" />))}
        </svg>
        {favTools.map(([label, icon]) => (
          <button key={label} aria-label={label} className="flex w-[38px] items-center justify-center">
            <Glyph size={26}>{icon}</Glyph>
          </button>
        ))}
      </div>
      <div className="ml-auto flex items-center whitespace-nowrap">
        <span className="mr-2.5">10:01:05 UTC+9</span>
        <Sep />
        <button className="mx-2.5 w-14">配当調整</button>
        <button aria-label="パネルを閉じる" className="flex h-[34px] w-[34px] items-center justify-center rounded-md bg-[#3d3d3d]">
          <Glyph><path d="M15.500 7v5.500H20M8 15.500h4.500V21" /></Glyph>
        </button>
      </div>
    </div>
  );
}

export default function App() {
  return (
    <div className="flex h-screen min-h-[900px] flex-col overflow-hidden bg-[#2e2e2e] font-['Noto_Sans','Noto_Sans_CJK_JP',sans-serif]">
      <TabStrip />
      <TopBar />
      <div className="flex min-h-0 flex-1 gap-1 pt-1">
        <DrawBar />
        <main className="flex min-w-0 flex-1 flex-col pb-0.5">
          <Chart />
          <BottomBar />
        </main>
        <WidgetBar />
      </div>
    </div>
  );
}
